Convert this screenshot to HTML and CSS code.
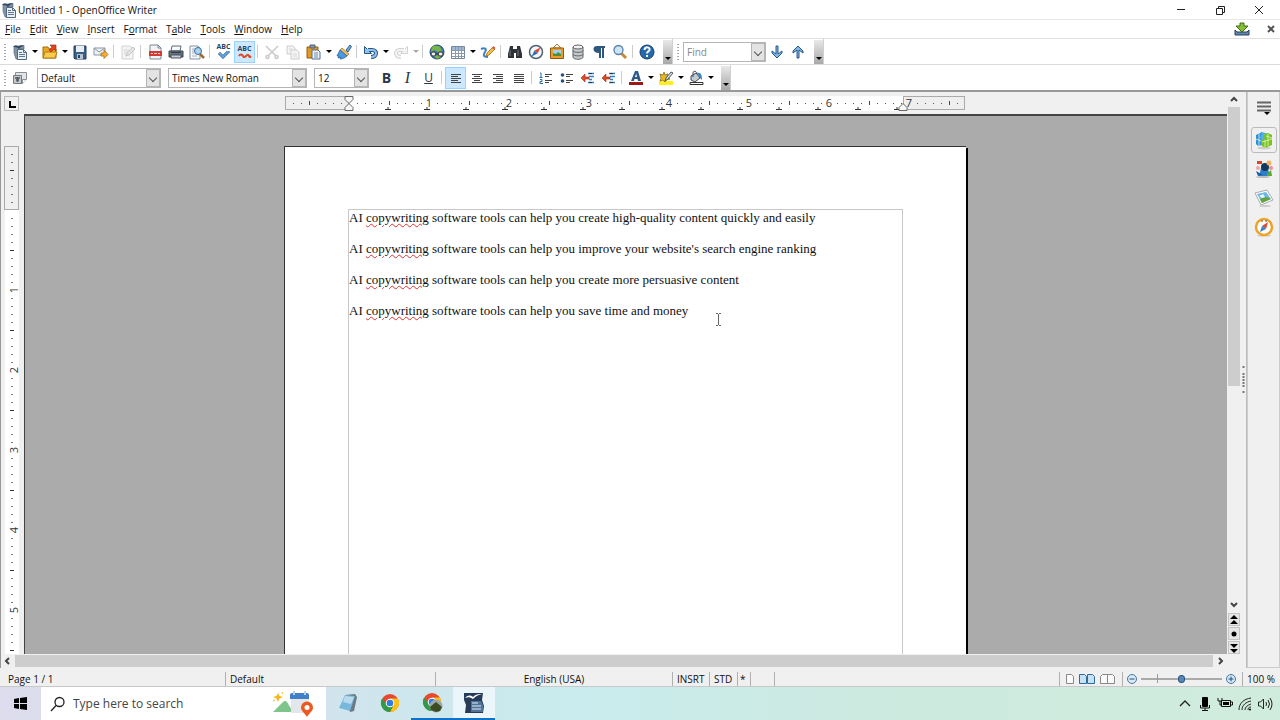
FILE: index.html
```
<!DOCTYPE html>
<html lang="en">
<head>
    <meta charset="UTF-8">
    <meta name="viewport" content="width=device-width, initial-scale=1.0">
    <title>Untitled 1 - OpenOffice Writer</title>
    <link rel="stylesheet" href="styles.css">
</head>
<body>
    <!-- icon sprite -->
    <svg class="sprite" aria-hidden="true">
        <symbol id="i-writer" viewBox="0 0 16 16"><path d="M2 2h10v3H7v10H4L2 9z" fill="#8295a6" stroke="#5b7083" stroke-width=".7"/><path d="M1 3c2-2 4-2 5-.5C8 1 10 1 13 1 10 2 8 3 7 5 5 3 3 3 1 3z" fill="#33475a"/><path d="M5.500 5.500h6l3 3v7h-9z" fill="#eaf0f5" stroke="#526a80"/><path d="M11.500 5.500v3h3" fill="none" stroke="#526a80"/><path d="M7 8.500h3M7 10.500h6M7 12.500h6" stroke="#5d7890"/></symbol>
        <symbol id="i-open" viewBox="0 0 16 16"><path d="M1 3h5l1 2h7v9H1z" fill="#e9a820" stroke="#9d6d0c"/><path d="M3 8h12l-2 6H1z" fill="#fccb4d" stroke="#b27d12"/><path d="M8 1h6v6l-2-2-3 3-2-2 3-3z" fill="#e2431e" stroke="#9c2410" stroke-width=".6"/></symbol>
        <symbol id="i-save" viewBox="0 0 16 16"><path d="M2 2h12v13H3l-1-1z" fill="#386089" stroke="#24405e"/><path d="M4 2h8v6H4z" fill="#e9eef3"/><path d="M5 10h6v5H5z" fill="#b7c4d0"/><path d="M6 11h2v3H6z" fill="#29415a"/></symbol>
        <symbol id="i-mail" viewBox="0 0 16 16"><path d="M1 4h11v7H1z" fill="#eef1f4" stroke="#8795a3"/><path d="M1 4l5 4 6-4" fill="none" stroke="#8795a3"/><path d="M8 9h3V6l4 4.500-4 4V12H8z" fill="#f6b03a" stroke="#a96c13" stroke-width=".8"/></symbol>
        <symbol id="i-edit" viewBox="0 0 16 16"><path d="M2 2h8l3 3v10H2z" fill="#f4f4f4" stroke="#d3d3d3"/><path d="M4 6h5M4 8h4M4 10h3" stroke="#d6d6d6"/><path d="M6 12l1-3 6-6 2 2-6 6z" fill="#e4e4e4" stroke="#c6c6c6"/></symbol>
        <symbol id="i-pdf" viewBox="0 0 16 16"><path d="M3 1h8l3 3v11H3z" fill="#f2f3f5" stroke="#7c8793"/><path d="M11 1v3h3" fill="none" stroke="#7c8793"/><path d="M2 7h13v5H2z" fill="#d33a34"/><path d="M4 9.500h2M7 9.500h3M11 9.500h2" stroke="#f7c9c6" fill="none"/></symbol>
        <symbol id="i-print" viewBox="0 0 16 16"><path d="M4 2h9l-1 5H3z" fill="#f7f9fb" stroke="#5b6b7a"/><path d="M1 7h14v6H1z" fill="#66737f" stroke="#3c4854"/><path d="M3 11h10v3H3z" fill="#c5ced6" stroke="#48535e"/><path d="M3 8.500h10" stroke="#343d46"/></symbol>
        <symbol id="i-preview" viewBox="0 0 16 16"><path d="M1 2h8l2 2v11H1z" fill="#f7f8f9" stroke="#8492a0"/><path d="M3 5h3M3 7h2M3 9h2M3 12h5" stroke="#a7b1bb"/><path d="M11 10l4 4" stroke="#a06a2c" stroke-width="2.500"/><circle cx="9" cy="7" r="3.500" fill="#a9d3f1" stroke="#3b6d98"/></symbol>
        <symbol id="i-cut" viewBox="0 0 16 16"><g fill="none" stroke="#c9c9c9" stroke-width="1.500"><path d="M2 2l10 10M14 2L4 12"/><circle cx="3.500" cy="13" r="1.500"/><circle cx="12.500" cy="13" r="1.500"/></g></symbol>
        <symbol id="i-copy" viewBox="0 0 16 16"><g fill="#f4f4f4" stroke="#cdcdcd"><path d="M2 2h6l2 2v6H2z"/><path d="M6 6h6l2 2v7H6z"/></g><path d="M8 10h4M8 12h4M4 5h3" stroke="#d8d8d8"/></symbol>
        <symbol id="i-paste" viewBox="0 0 16 16"><path d="M1 3h11v11H1z" fill="#e09a28" stroke="#945c0d"/><path d="M4 1h5v3H4z" fill="#8c98a5" stroke="#56616d"/><path d="M6 6h6l2 2v7H6z" fill="#eef3f8" stroke="#53708f"/><path d="M8 9h4M8 11h4M8 13h4" stroke="#6e8cab"/></symbol>
        <symbol id="i-brush" viewBox="0 0 16 16"><path d="M10 6l4-5 1.500 1.500L12 8z" fill="#7aa7d6" stroke="#2d5d92"/><path d="M6 4l7 6-2 2-7-6z" fill="#edbe62" stroke="#9b6b1b" stroke-width=".7"/><path d="M4 6l7 6c-2 2-5 3-7 3l1-2-3 1 1-2-2 0c1-2 2-4 3-6z" fill="#4c9ae0" stroke="#2162a3" stroke-width=".8"/></symbol>
        <symbol id="i-undo" viewBox="0 0 16 16"><path d="M5 6h4c6 0 5 7-1 7" fill="none" stroke="#28588a" stroke-width="4"/><path d="M1.500 2.500v7h7L6 7l-2-2z" fill="#91c0e8" stroke="#28588a"/><path d="M4 6h5c6 0 5 7-1 7" fill="none" stroke="#91c0e8" stroke-width="2"/></symbol>
        <symbol id="i-redo" viewBox="0 0 16 16"><path d="M11 6H7c-6 0-5 7 1 7" fill="none" stroke="#d2d2d2" stroke-width="4"/><path d="M14.500 2.500v7h-7L10 7l2-2z" fill="#f3f3f3" stroke="#d2d2d2"/><path d="M12 6H7c-6 0-5 7 1 7" fill="none" stroke="#f3f3f3" stroke-width="2"/></symbol>
        <symbol id="i-link" viewBox="0 0 16 16"><circle cx="8" cy="8" r="7" fill="#3c7db8" stroke="#24496e"/><path d="M3 3c3-2 6-1 8 0l2 4-4 1-3-2-4 2zM5 12l5-1 2 2-4 2z" fill="#79b544"/><rect x="2" y="8" width="5" height="4" rx="2" fill="#eee" stroke="#333"/><rect x="9" y="8" width="5" height="4" rx="2" fill="#eee" stroke="#333"/><path d="M6 10h4" stroke="#333"/></symbol>
        <symbol id="i-table" viewBox="0 0 16 16"><path d="M1.500 2.500h13v12h-13z" fill="#fff" stroke="#77889a"/><path d="M2 3h12v3H2z" fill="#9cb8d4"/><path d="M2 6.500h12M2 9.500h12M2 12.500h12M5.500 3v11M8.500 3v11M11.500 3v11" stroke="#8a9aaa"/></symbol>
        <symbol id="i-draw" viewBox="0 0 16 16"><path d="M1 5c4-2 6 0 4 3s-2 5 3 5" fill="none" stroke="#3e80c5" stroke-width="2"/><path d="M6 12l1-3 6-6 2 2-6 6z" fill="#f6be45" stroke="#a06b17" stroke-width=".8"/><path d="M12 4l1.500-2 2 2L14 5.500z" fill="#de5a4a"/></symbol>
        <symbol id="i-find" viewBox="0 0 16 16"><path d="M3 2h3v3h4V2h3l2 8v4H9V9H7v5H1v-4z" fill="#2f3236"/><path d="M3 6v6M11 6v6" stroke="#777d84"/></symbol>
        <symbol id="i-navigator" viewBox="0 0 16 16"><circle cx="8" cy="8" r="6.500" fill="#f2f6fa" stroke="#50616f" stroke-width="1.500"/><path d="M12.500 3.500L9.500 9.500 6.500 6.500z" fill="#e0452d"/><path d="M3.500 12.500l3-6 3 3z" fill="#2b6fb3"/></symbol>
        <symbol id="i-gallery" viewBox="0 0 16 16"><path d="M8 0L4 4h8z" fill="none" stroke="#a6752a"/><path d="M1.500 4h13v10.500h-13z" fill="#e89d31" stroke="#8f5a10"/><path d="M4 6h8v6H4z" fill="#9fd0ef"/><path d="M4 12V9l3 1 2-2 3 2v2z" fill="#4e8e3a"/></symbol>
        <symbol id="i-database" viewBox="0 0 16 16"><path d="M3 3v10c0 3 10 3 10 0V3z" fill="#c6c9cc" stroke="#60656a"/><ellipse cx="8" cy="3" rx="5" ry="2" fill="#eff0f1" stroke="#60656a"/><path d="M3 6.500c0 2.500 10 2.500 10 0M3 10c0 2.500 10 2.500 10 0" fill="none" stroke="#60656a"/></symbol>
        <symbol id="i-para" viewBox="0 0 16 16"><path d="M6 2h8v2h-1v10h-2V4h-1v10H8V9C1 9 1 2 6 2z" fill="#2e5780"/></symbol>
        <symbol id="i-zoom" viewBox="0 0 16 16"><path d="M9 9l5 5" stroke="#c98a32" stroke-width="3"/><circle cx="6.500" cy="6" r="4.500" fill="#cbe5f8" stroke="#5b7fa5" stroke-width="1.300"/></symbol>
        <symbol id="i-help" viewBox="0 0 16 16"><circle cx="8" cy="8" r="7" fill="#2569ac" stroke="#143f6f"/><path d="M5.500 6c0-4 6-3 5 0-.6 1.500-2.500 1.500-2.500 3.500M8 11v2" fill="none" stroke="#fff" stroke-width="2"/></symbol>
        <symbol id="i-down" viewBox="0 0 16 16"><path d="M7 2h2v8l4-3v2l-5 5-5-5V7l4 3z" fill="#84b6e4" stroke="#265789"/></symbol>
        <symbol id="i-up" viewBox="0 0 16 16"><path d="M7 14h2V6l4 3V7L8 2 3 7v2l4-3z" fill="#84b6e4" stroke="#265789"/></symbol>
        <symbol id="i-styles" viewBox="0 0 16 16"><path d="M3.500 2.500h11v7l-4 4h-7z" fill="#e2e4e6" stroke="#8a9097"/><path d="M14.500 9.500h-4v4" fill="#fff" stroke="#8a9097"/><path d="M1.500 5.500h8v8h-8z" fill="#c3c8cd" stroke="#737b84"/><path d="M3 8h5M5.500 7v5M4 10h3" stroke="#535b64" stroke-width="1.500"/></symbol>
        <symbol id="i-left" viewBox="0 0 16 16"><path d="M3 4.500h10M3 6.500h7M3 8.500h10M3 10.500h7M3 12.500h10" stroke="#444"/></symbol>
        <symbol id="i-center" viewBox="0 0 16 16"><path d="M3 4.500h10M5 6.500h6M3 8.500h10M5 10.500h6M3 12.500h10" stroke="#444"/></symbol>
        <symbol id="i-right" viewBox="0 0 16 16"><path d="M3 4.500h10M6 6.500h7M3 8.500h10M6 10.500h7M3 12.500h10" stroke="#444"/></symbol>
        <symbol id="i-justify" viewBox="0 0 16 16"><path d="M3 4.500h10M3 6.500h10M3 8.500h10M3 10.500h10M3 12.500h10" stroke="#444"/></symbol>
        <symbol id="i-numbers" viewBox="0 0 16 16"><path d="M2 3h1v4M1.500 7.500h3M2 9.500h2v2H2v2h3" fill="none" stroke="#2c6ca8"/><path d="M7 4.500h7M7 6.500h4M7 10.500h7M7 12.500h4" stroke="#444"/></symbol>
        <symbol id="i-bullets" viewBox="0 0 16 16"><circle cx="3.500" cy="5" r="1.800" fill="#24517d"/><circle cx="3.500" cy="11" r="1.800" fill="#24517d"/><path d="M7 4.500h7M7 6.500h4M7 10.500h7M7 12.500h4" stroke="#444"/></symbol>
        <symbol id="i-outdent" viewBox="0 0 16 16"><path d="M8 3.500h6M9 6.500h5M9 9.500h3M8 12.500h6" stroke="#2f80c4" stroke-width="1.500"/><path d="M9 3.500h3M9 12.500h3" stroke="#333"/><path d="M1 8l4-4v3h4v2H5v3z" fill="#df4a28" stroke="#9d2c13" stroke-width=".6"/></symbol>
        <symbol id="i-fontcolor" viewBox="0 0 16 16"><path d="M3 11L7 1h3l3 10h-3l-.5-2H6.500L6 11zM7 7h2l-.8-3.500z" fill="#2f5a87"/><path d="M1 12h14v3H1z" fill="#a01616"/></symbol>
        <symbol id="i-highlight" viewBox="0 0 16 16"><path d="M1 11h14v4H1z" fill="#ffee1d"/><path d="M2 4l3 1 1-3 1 3 3-1-1 3 3 2-4 1-1 2-2-2-3 1 1-3z" fill="#e7b91e" stroke="#775f14" stroke-width=".7"/><path d="M7 11l1-3 5-6 2 1-5 6z" fill="#d6dce2" stroke="#4d5964"/></symbol>
        <symbol id="i-fill" viewBox="0 0 16 16"><path d="M3 6l5-3 4 5-5 4-4-2z" fill="#c3cbd3" stroke="#414b55"/><path d="M5 7V3c0-3 4-2 4 1" fill="none" stroke="#414b55"/><path d="M9 3c4-1 5 2 5 7l-2-2z" fill="#3e83c4"/><path d="M2 12.500h13v2H2z" fill="#fff" stroke="#333"/></symbol>
        <symbol id="i-update" viewBox="0 0 16 16"><path d="M1 9l2 2h10l2-2v5H1z" fill="#5f88ad" stroke="#29435b"/><path d="M6 2h4v3h4l-6 6-6-6h4z" fill="#86bf36" stroke="#3d6d13"/></symbol>
        <symbol id="i-cube" viewBox="0 0 20 20"><ellipse cx="10" cy="18" rx="7" ry="1.500" fill="#ccc"/><path d="M2 5l6-3v13l-4 1-2-2z" fill="#2a8fdd"/><path d="M8 2l10 3v4l-9 2-3-3z" fill="#55aee9"/><path d="M9 5l5-2 4 2v10l-7 3-4-3v-5l4-1z" fill="#79c31e"/><path d="M2 9l5 2M5 3v13M11 10v8M8 12l10-3M14 4v12M12 6l6 2" stroke="#e6f7cb" stroke-width=".8"/></symbol>
        <symbol id="i-stylist" viewBox="0 0 20 20"><ellipse cx="9" cy="18" rx="7" ry="1" fill="#bbb"/><path d="M5 17l2-8 7 1 2 7z" fill="#2e7ec9"/><circle cx="11" cy="8" r="4" fill="#123a5c"/><path d="M3 2h5v3H3z" fill="#d44725"/><circle cx="15" cy="4" r="2.500" fill="#f2b15d"/><circle cx="17" cy="9" r="2" fill="#ee8e94"/><circle cx="4" cy="9" r="2" fill="#f0a6a2"/><path d="M13 15l4-4 1 6h-5z" fill="#58a92c"/><path d="M2 12l7 4-5 1z" fill="#1b5c9e"/></symbol>
        <symbol id="i-pictures" viewBox="0 0 20 20"><ellipse cx="11" cy="18" rx="6" ry="1" fill="#ccc"/><path d="M1 5l12-3 6 10-12 5z" fill="#fff" stroke="#aaa"/><path d="M3 6l9-2 5 7-9 4z" fill="#6ab6e6"/><path d="M6 11l6-2 5 2-9 4z" fill="#67a236"/><path d="M5 8l4-2 2 3-3 1z" fill="#eaf5fc"/></symbol>
        <symbol id="i-compass" viewBox="0 0 20 20"><ellipse cx="10" cy="18.500" rx="7" ry="1" fill="#ccc"/><circle cx="10" cy="10" r="8" fill="#fdfdfd" stroke="#eda324" stroke-width="2.500"/><path d="M14 5l-2 7-4-3z" fill="#d94b35"/><path d="M6 15l2-6 4 3z" fill="#3a84c8"/><path d="M8 5V3M12 5V3" stroke="#555"/></symbol>
        <symbol id="i-chrome" viewBox="0 0 20 20"><circle cx="10" cy="10" r="9" fill="#e6492d"/><path d="M17.800 5.500A9 9 0 0 1 10 19l3.500-7L10 5.500z" fill="#fbc318"/><path d="M10 19A9 9 0 0 1 2.200 5.500L6.500 12l7 0z" fill="#2f9a48"/><circle cx="10" cy="10" r="4.300" fill="#fff"/><circle cx="10" cy="10" r="3.300" fill="#2f7de1"/></symbol>
    </svg>

    <header class="titlebar">
        <svg class="icon"><use href="#i-writer"/></svg>
        <h1>Untitled 1 - OpenOffice Writer</h1>
        <div class="window-buttons">
            <button aria-label="Minimize"><svg class="small"><path d="M1 4.500h8" stroke="#222"/></svg></button>
            <button aria-label="Restore"><svg class="small"><path d="M1.500 3.500h6v6h-6zM3.500 3V1.500h6v6H8" fill="none" stroke="#222"/></svg></button>
            <button aria-label="Close"><svg class="small"><path d="M1 1l8 8M9 1L1 9" stroke="#222"/></svg></button>
        </div>
    </header>

    <nav class="menubar">
        <button><u>F</u>ile</button>
        <button><u>E</u>dit</button>
        <button><u>V</u>iew</button>
        <button><u>I</u>nsert</button>
        <button>F<u>o</u>rmat</button>
        <button>T<u>a</u>ble</button>
        <button><u>T</u>ools</button>
        <button><u>W</u>indow</button>
        <button><u>H</u>elp</button>
        <span class="spacer"></span>
        <button class="update" aria-label="Update"><svg class="icon"><use href="#i-update"/></svg></button>
        <button class="close-doc" aria-label="Close document"><svg class="small"><path d="M2 2l6 6M8 2L2 8" stroke="#555" stroke-width="2"/></svg></button>
    </nav>

    <div class="toolbar-row">
        <div class="toolbar">
            <span class="grip"></span>
            <button class="tool" aria-label="New"><svg class="icon"><use href="#i-writer"/></svg></button>
            <button class="drop" aria-label="New options"></button>
            <button class="tool" aria-label="Open"><svg class="icon"><use href="#i-open"/></svg></button>
            <button class="drop" aria-label="Recent files"></button>
            <button class="tool" aria-label="Save"><svg class="icon"><use href="#i-save"/></svg></button>
            <button class="tool" aria-label="E-mail"><svg class="icon"><use href="#i-mail"/></svg></button>
            <span class="sep"></span>
            <button class="tool" aria-label="Edit file"><svg class="icon"><use href="#i-edit"/></svg></button>
            <span class="sep"></span>
            <button class="tool" aria-label="Export PDF"><svg class="icon"><use href="#i-pdf"/></svg></button>
            <button class="tool" aria-label="Print"><svg class="icon"><use href="#i-print"/></svg></button>
            <button class="tool" aria-label="Page preview"><svg class="icon"><use href="#i-preview"/></svg></button>
            <span class="sep"></span>
            <button class="tool spell" aria-label="Spelling"><span class="abc">ABC</span><svg width="14" height="9"><path d="M2 2l4 4 6-6" fill="none" stroke="#234e80" stroke-width="3"/><path d="M2 2l4 4 6-6" fill="none" stroke="#5fa5dd" stroke-width="2"/></svg></button>
            <button class="tool spell active" aria-label="AutoSpellcheck"><span class="abc">ABC</span><svg width="14" height="5"><path d="M1 3c1-2 3-2 4 0s2 1 3 0 2-2 3 0 1 1 2 0" fill="none" stroke="#de4a24" stroke-width="2"/></svg></button>
            <span class="sep"></span>
            <button class="tool" aria-label="Cut"><svg class="icon"><use href="#i-cut"/></svg></button>
            <button class="tool" aria-label="Copy"><svg class="icon"><use href="#i-copy"/></svg></button>
            <button class="tool" aria-label="Paste"><svg class="icon"><use href="#i-paste"/></svg></button>
            <button class="drop" aria-label="Paste options"></button>
            <button class="tool" aria-label="Format paintbrush"><svg class="icon"><use href="#i-brush"/></svg></button>
            <span class="sep"></span>
            <button class="tool" aria-label="Undo"><svg class="icon"><use href="#i-undo"/></svg></button>
            <button class="drop" aria-label="Undo list"></button>
            <button class="tool" aria-label="Redo"><svg class="icon"><use href="#i-redo"/></svg></button>
            <button class="drop disabled" aria-label="Redo list"></button>
            <span class="sep"></span>
            <button class="tool" aria-label="Hyperlink"><svg class="icon"><use href="#i-link"/></svg></button>
            <button class="tool" aria-label="Table"><svg class="icon"><use href="#i-table"/></svg></button>
            <button class="drop" aria-label="Table size"></button>
            <button class="tool" aria-label="Draw functions"><svg class="icon"><use href="#i-draw"/></svg></button>
            <span class="sep"></span>
            <button class="tool" aria-label="Find and replace"><svg class="icon"><use href="#i-find"/></svg></button>
            <button class="tool" aria-label="Navigator"><svg class="icon"><use href="#i-navigator"/></svg></button>
            <button class="tool" aria-label="Gallery"><svg class="icon"><use href="#i-gallery"/></svg></button>
            <button class="tool" aria-label="Data sources"><svg class="icon"><use href="#i-database"/></svg></button>
            <button class="tool" aria-label="Nonprinting characters"><svg class="icon"><use href="#i-para"/></svg></button>
            <button class="tool" aria-label="Zoom"><svg class="icon"><use href="#i-zoom"/></svg></button>
            <span class="sep"></span>
            <button class="tool" aria-label="Help"><svg class="icon"><use href="#i-help"/></svg></button>
            <button class="overflow" aria-label="More buttons"></button>
        </div>
        <div class="toolbar">
            <span class="grip"></span>
            <div class="combo find">
                <input type="text" placeholder="Find" aria-label="Find">
                <span class="combo-arrow"></span>
            </div>
            <button class="tool" aria-label="Find next"><svg class="icon"><use href="#i-down"/></svg></button>
            <button class="tool" aria-label="Find previous"><svg class="icon"><use href="#i-up"/></svg></button>
            <button class="overflow" aria-label="More buttons"></button>
        </div>
    </div>

    <div class="toolbar-row formatting">
        <div class="toolbar">
            <span class="grip"></span>
            <button class="tool" aria-label="Styles and formatting"><svg class="icon"><use href="#i-styles"/></svg></button>
            <div class="combo style">
                <select aria-label="Apply style"><option>Default</option></select>
                <span class="combo-arrow"></span>
            </div>
            <div class="combo font">
                <select aria-label="Font name"><option>Times New Roman</option></select>
                <span class="combo-arrow"></span>
            </div>
            <div class="combo size">
                <select aria-label="Font size"><option>12</option></select>
                <span class="combo-arrow"></span>
            </div>
            <button class="tool letter bold first">B</button>
            <button class="tool letter italic">I</button>
            <button class="tool letter underline">U</button>
            <span class="sep"></span>
            <button class="tool active" aria-label="Align left"><svg class="icon"><use href="#i-left"/></svg></button>
            <button class="tool" aria-label="Centered"><svg class="icon"><use href="#i-center"/></svg></button>
            <button class="tool" aria-label="Align right"><svg class="icon"><use href="#i-right"/></svg></button>
            <button class="tool" aria-label="Justified"><svg class="icon"><use href="#i-justify"/></svg></button>
            <span class="sep"></span>
            <button class="tool" aria-label="Numbering"><svg class="icon"><use href="#i-numbers"/></svg></button>
            <button class="tool" aria-label="Bullets"><svg class="icon"><use href="#i-bullets"/></svg></button>
            <button class="tool" aria-label="Decrease indent"><svg class="icon"><use href="#i-outdent"/></svg></button>
            <button class="tool" aria-label="Increase indent"><svg class="icon"><use href="#i-outdent"/></svg></button>
            <span class="sep"></span>
            <button class="tool" aria-label="Font color"><svg class="icon"><use href="#i-fontcolor"/></svg></button>
            <button class="drop" aria-label="Font color list"></button>
            <button class="tool" aria-label="Highlighting"><svg class="icon"><use href="#i-highlight"/></svg></button>
            <button class="drop" aria-label="Highlighting list"></button>
            <button class="tool" aria-label="Background color"><svg class="icon"><use href="#i-fill"/></svg></button>
            <button class="drop" aria-label="Background color list"></button>
            <button class="overflow" aria-label="More buttons"></button>
        </div>
    </div>

    <main class="workspace">
        <div class="editor">
            <div class="corner"><button class="tab-type" aria-label="Tab type"><svg class="small"><path d="M3 2v6h6" fill="none" stroke="#000" stroke-width="2"/></svg></button></div>
            <div class="ruler">
                <svg width="681" height="22">
                    <defs>
                        <pattern id="inch" x="64" y="0" width="80" height="23" patternUnits="userSpaceOnUse">
                            <path d="M8 11.500h1M16 11.500h1M24 11.500h1M32 11.500h1M48 11.500h1M56 11.500h1M64 11.500h1M72 11.500h1" stroke="#555"/>
                            <path d="M40.500 9v4" stroke="#444"/>
                        </pattern>
                        <path id="tab" d="M-3 17.500h6M0 15v3" stroke="#333"/>
                    </defs>
                    <rect x="64" y="4" width="554" height="15" fill="#fff"/>
                    <rect x=".5" y="4.500" width="63" height="13" fill="#efefef" stroke="#aaa"/>
                    <rect x="618.500" y="4.500" width="61" height="13" fill="#efefef" stroke="#aaa"/>
                    <rect x="2" y="5" width="676" height="12" fill="url(#inch)"/>
                    <use href="#tab" x="103"/><use href="#tab" x="142"/><use href="#tab" x="181"/><use href="#tab" x="220"/>
                    <use href="#tab" x="259"/><use href="#tab" x="298"/><use href="#tab" x="337"/><use href="#tab" x="377"/>
                    <use href="#tab" x="416"/><use href="#tab" x="455"/><use href="#tab" x="494"/><use href="#tab" x="533"/>
                    <use href="#tab" x="573"/><use href="#tab" x="612"/>
                    <g class="ruler-text">
                        <text x="144" y="15">1</text><text x="224" y="15">2</text><text x="304" y="15">3</text>
                        <text x="384" y="15">4</text><text x="464" y="15">5</text><text x="544" y="15">6</text><text x="624" y="15">7</text>
                    </g>
                    <path d="M60 4.500h8v3l-4 4 4 4v3h-8v-3l4-4-4-4z" fill="#f7f7f7" stroke="#666"/>
                    <path d="M614 18.500v-3l4-4 4 4v3z" fill="#f7f7f7" stroke="#666"/>
                </svg>
            </div>
            <div class="vruler">
                <svg width="16" height="1000">
                    <defs>
                        <pattern id="vinch" x="0" y="64" width="16" height="80" patternUnits="userSpaceOnUse">
                            <path d="M7 8.500h2M7 16.500h2M7 24.500h2M7 32.500h2M7 48.500h2M7 56.500h2M7 64.500h2M7 72.500h2" stroke="#777"/>
                            <path d="M6 40.500h4" stroke="#333"/>
                        </pattern>
                    </defs>
                    <rect x="1" y="64" width="14" height="936" fill="#fff"/>
                    <rect x=".5" y=".5" width="14" height="63" fill="#efefef" stroke="#aaa"/>
                    <rect x="1" y="2" width="14" height="998" fill="url(#vinch)"/>
                    <g class="ruler-text">
                        <text transform="translate(14 144) rotate(-90)">1</text>
                        <text transform="translate(14 224) rotate(-90)">2</text>
                        <text transform="translate(14 304) rotate(-90)">3</text>
                        <text transform="translate(14 384) rotate(-90)">4</text>
                        <text transform="translate(14 464) rotate(-90)">5</text>
                    </g>
                </svg>
            </div>
            <div class="canvas">
                <article class="page">
                    <div class="text-area">
                        <p>AI <span class="misspelled">copywriting</span> software tools can help you create high-quality content quickly and easily</p>
                        <p>AI <span class="misspelled">copywriting</span> software tools can help you improve your website's search engine ranking</p>
                        <p>AI <span class="misspelled">copywriting</span> software tools can help you create more persuasive content</p>
                        <p>AI <span class="misspelled">copywriting</span> software tools can help you save time and money</p>
                    </div>
                    <svg class="ibeam" width="7" height="13"><path d="M1 .5h2M4 .5h2M3.500 1v11M1 12.500h2M4 12.500h2" stroke="#666"/></svg>
                </article>
            </div>
            <div class="vscroll">
                <button aria-label="Scroll up"><svg class="small"><path d="M2 7l3-3 3 3" fill="none" stroke="#444" stroke-width="2"/></svg></button>
                <div class="track"><div class="thumb"></div></div>
                <button aria-label="Scroll down"><svg class="small"><path d="M2 3l3 3 3-3" fill="none" stroke="#444" stroke-width="2"/></svg></button>
                <button class="boxed" aria-label="Previous page"><svg class="small"><path d="M5 0l4 4H1zM5 5l4 4H1z"/></svg></button>
                <button class="boxed" aria-label="Navigation"><svg class="small"><circle cx="5" cy="5" r="2.500"/></svg></button>
                <button class="boxed" aria-label="Next page"><svg class="small"><path d="M5 5l4-4H1zM5 10l4-4H1z"/></svg></button>
            </div>
            <div class="hscroll">
                <button aria-label="Scroll left"><svg class="small"><path d="M6 2L3 5l3 3" fill="none" stroke="#444" stroke-width="2"/></svg></button>
                <div class="track"></div>
                <button aria-label="Scroll right"><svg class="small"><path d="M4 2l3 3-3 3" fill="none" stroke="#444" stroke-width="2"/></svg></button>
            </div>
        </div>
        <div class="splitter"><svg width="3" height="30"><path d="M1.500 1v3M1.500 8v15M1.500 26v3" stroke="#777" stroke-width="2" stroke-dasharray="2 1"/></svg></div>
        <aside class="sidebar">
            <button aria-label="Sidebar settings"><svg width="20" height="20"><path d="M3 5.500h14M3 9.500h14M3 13.500h14" stroke="#666" stroke-width="2"/><path d="M10 15h6l-3 3z"/></svg></button>
            <button class="selected" aria-label="Properties"><svg width="20" height="20"><use href="#i-cube"/></svg></button>
            <button aria-label="Styles"><svg width="20" height="20"><use href="#i-stylist"/></svg></button>
            <button aria-label="Gallery"><svg width="20" height="20"><use href="#i-pictures"/></svg></button>
            <button aria-label="Navigator"><svg width="20" height="20"><use href="#i-compass"/></svg></button>
        </aside>
    </main>

    <footer class="statusbar">
        <span class="cell page-no">Page 1 / 1</span>
        <span class="cell page-style">Default</span>
        <span class="cell language">English (USA)</span>
        <span class="cell insert-mode">INSRT</span>
        <span class="cell select-mode">STD</span>
        <span class="cell modified">*</span>
        <span class="cell signature"></span>
        <span class="cell rest"></span>
        <span class="cell view-layout">
            <button aria-label="Single page"><svg width="9" height="12"><path d="M.5 1.500h5l2 2v7h-7z" fill="#fafafa" stroke="#888"/></svg></button>
            <button aria-label="Multiple pages"><svg width="17" height="12"><path d="M.5 1.500h5l2 2v7h-7zM8.500 1.500h5l2 2v7h-7z" fill="#c7e2f7" stroke="#2e6c9e"/></svg></button>
            <button aria-label="Book view"><svg width="16" height="12"><path d="M.5 3.500l2-2h5v9h-7zM7.500 1.500h5l2 2v7h-7z" fill="#fafafa" stroke="#888"/></svg></button>
        </span>
        <span class="cell zoom-slider">
            <button aria-label="Zoom out"><svg class="small"><circle cx="5" cy="5" r="4.500" fill="#d8eaf8" stroke="#47759e"/><path d="M2.500 5h5" stroke="#234e78"/></svg></button>
            <input type="range" min="0" max="100" value="50" aria-label="Zoom">
            <button aria-label="Zoom in"><svg class="small"><circle cx="5" cy="5" r="4.500" fill="#d8eaf8" stroke="#47759e"/><path d="M2.500 5h5M5 2.500v5" stroke="#234e78"/></svg></button>
        </span>
        <span class="cell zoom-value">100 %</span>
    </footer>

    <div class="taskbar">
        <button class="start" aria-label="Start"><svg width="15" height="15"><path d="M1 3l5-1v5H1zM7 2l7-1v6H7zM1 8h5v5l-5-1zM7 8h7v6l-7-1z"/></svg></button>
        <div class="search">
            <svg width="16" height="16"><circle cx="9.500" cy="6" r="4.500" fill="none" stroke="#222" stroke-width="1.300"/><path d="M6 9.500L1 15" stroke="#222" stroke-width="1.300"/></svg>
            <input type="text" placeholder="Type here to search" aria-label="Type here to search">
            <svg width="42" height="26"><path d="M1 21L11 11q2-2 4 0l6 10z" fill="#7dc58b"/><path d="M19 8h18v14H19z" fill="#e3e6ea"/><path d="M18 4q0-2 2-2h15q2 0 2 2v4H18z" fill="#3f7fcc"/><path d="M22 0v4M33 0v4" stroke="#bcd0e6" stroke-width="2"/><path d="M6 2l1.500 3L11 6 7.500 7.500 6 11 4.500 7.500 1 6l3.500-1z" fill="#f5b71c"/><path d="M10 1l1 2M1 10l2-1" stroke="#f5b71c"/><path d="M35 26c-3-5-6-6-6-9.500a6 6 0 0 1 12 0c0 3.500-3 4.500-6 9.500z" fill="#ea5a22"/><circle cx="35" cy="16.500" r="2.500" fill="#fff"/></svg>
        </div>
        <button class="app" aria-label="Notepad"><svg width="20" height="20" viewBox="0 0 20 20"><path d="M7 2l10-1 2 3-3 14-4 1z" fill="#6e7880"/><path d="M7 2l10 1-5 15L1 15z" fill="#79b8dc"/><path d="M7 3l9 1-3 7-8-2z" fill="#b8dbee"/></svg></button>
        <button class="app" aria-label="Chrome"><svg width="20" height="20"><use href="#i-chrome"/></svg></button>
        <button class="app open" aria-label="Chrome profile"><svg width="24" height="22"><use href="#i-chrome" x="2" width="20" height="20"/><circle cx="16" cy="14" r="6.500" fill="#9ba8aa"/><path d="M10 15l6-5 6 5-2 4-4 1-5-2z" fill="#3e4c22"/></svg></button>
        <button class="app open current" aria-label="OpenOffice Writer"><svg width="22" height="22" viewBox="0 0 22 22"><path d="M1 1h19l-1 7 2 6-1 7H2l1-8-2-5z" fill="#243c58"/><path d="M8 9h10l2 4v7H8z" fill="#507298"/><path d="M2 6c3-3 5-3 8-1 3-3 5-3 9-3-4 1-6 2-9 5-3-2-5-2-8-1z" fill="#fff"/><path d="M9 11h6M9 14h9M9 17h9" stroke="#dfeaf4"/></svg></button>
        <span class="spacer"></span>
        <div class="tray">
            <button aria-label="Show hidden icons"><svg width="16" height="16"><path d="M3 10l5-5 5 5" fill="none" stroke="#222" stroke-width="1.300"/></svg></button>
            <button aria-label="Microphone"><svg width="16" height="16"><rect x="5" y="1" width="6" height="10" rx="1"/><path d="M3.500 9v3h9V9M8 12v3M5 14.500h6" fill="none" stroke="#111"/></svg></button>
            <button aria-label="Battery"><svg width="16" height="16"><path d="M4.500 4.500h9v6h-9zM14 6h1.500v3H14" fill="none" stroke="#111"/><path d="M6 6h6v3H6z"/><path d="M1 2v3h4V2M3 5v4h2" fill="none" stroke="#111"/></svg></button>
            <button aria-label="Network"><svg width="16" height="16"><path d="M2 14C2 7 7 3 14 2M5 14c0-5 4-8 9-9M8 14c0-3 3-5 6-6M11 14c0-2 1-3 3-3" fill="none" stroke="#222"/><circle cx="13" cy="13.500" r="1"/></svg></button>
            <button aria-label="Volume"><svg width="16" height="16"><path d="M1.500 6h2l3-3v10l-3-3h-2zM9 6q1 2 0 4M11 4q3 4 0 8M13 2q4 6 0 12" fill="none" stroke="#222"/></svg></button>
        </div>
    </div>
</body>
</html>
```

FILE: styles.css
```
:root {
    --ui-font: "Open Sans", "Noto Sans", sans-serif;
    --chrome-bg: #f0f0f0;
    --canvas-bg: #ababab;
    --line: #bdbdbd;
    --active-bg: #cce8ff;
    --active-border: #99d1ff;
}

* {
    box-sizing: border-box;
    margin: 0;
    padding: 0;
}

body {
    display: flex;
    flex-direction: column;
    height: 100vh;
    overflow: hidden;
    background-color: #fff;
    color: #111;
    font-family: var(--ui-font);
    font-size: 10px;
    line-height: 16px;
}

button {
    display: flex;
    align-items: center;
    justify-content: center;
    border: none;
    background: none;
    color: inherit;
    font: inherit;
}

svg {
    display: block;
    flex-shrink: 0;
}

.sprite {
    position: absolute;
    width: 0;
    height: 0;
}

.icon {
    width: 16px;
    height: 16px;
}

.small {
    width: 10px;
    height: 10px;
}

.spacer {
    flex: 1;
}

/* title and menu */
.titlebar {
    display: flex;
    align-items: center;
    height: 19px;
    padding: 0 2px 0 1px;
}

.titlebar h1 {
    flex: 1;
    padding-left: 1px;
    font-size: 10px;
    font-weight: 400;
}

.window-buttons {
    display: flex;
}

.window-buttons button {
    width: 39px;
    height: 19px;
}

.menubar {
    display: flex;
    align-items: center;
    gap: 1px;
    height: 20px;
    padding-left: 1px;
    border-top: 1px solid #e8e8e8;
    border-bottom: 1px solid #e0e0e0;
}

.menubar button {
    padding: 0 4px;
}

.menubar .update {
    padding: 0 11px;
}

/* toolbars */
.toolbar-row {
    display: flex;
    height: 26px;
    border-bottom: 1px solid #dcdcdc;
}

.toolbar-row.formatting {
    height: 25px;
    border-bottom: none;
}

.toolbar {
    display: flex;
    align-items: center;
    border-right: 1px solid #d0d0d0;
}

.grip {
    width: 2px;
    height: 16px;
    margin: 0 3px 0 4px;
    background: repeating-linear-gradient(#aaa 0 1px, #fff 1px 3px);
}

.tool {
    width: 21px;
    height: 22px;
}

.tool.active {
    border: 1px solid var(--active-border);
    background-color: var(--active-bg);
}

.spell {
    flex-direction: column;
}

.abc {
    color: #234567;
    font-size: 7px;
    font-weight: 700;
    line-height: 8px;
}

.drop {
    width: 9px;
    height: 22px;
}

.drop::before,
.overflow::before {
    content: "";
    border: 3px solid transparent;
    border-top-color: #000;
    border-bottom: none;
}

.drop.disabled::before {
    border-top-color: #aaa;
}

.sep {
    width: 1px;
    height: 13px;
    margin: 0 3px 0 2px;
    background-color: #ccc;
}

.overflow {
    align-items: flex-end;
    width: 9px;
    height: 24px;
    margin-left: 6px;
    padding-bottom: 4px;
    background: linear-gradient(#e8e8e8, #a8a8a8);
}

.combo {
    display: flex;
    align-items: center;
    height: 20px;
    margin-left: 7px;
    border: 1px solid #b5b5b5;
    background-color: #fff;
}

.combo select,
.combo input {
    flex: 1;
    min-width: 0;
    height: 18px;
    padding-left: 3px;
    border: none;
    outline: none;
    appearance: none;
    background: none;
    color: #111;
    font: inherit;
}

.combo input::placeholder {
    color: #888;
}

.combo-arrow {
    display: flex;
    align-items: center;
    justify-content: center;
    width: 14px;
    height: 18px;
    border: 1px solid #b5b5b5;
    background-color: #e3e3e3;
}

.combo-arrow::before {
    content: "";
    width: 5px;
    height: 5px;
    border: solid #555;
    border-width: 0 1px 1px 0;
    transform: rotate(45deg);
}

.combo.style {
    width: 124px;
}

.combo.font {
    width: 139px;
}

.combo.size {
    width: 55px;
}

.combo.find {
    width: 83px;
    margin-left: 1px;
}

.letter {
    color: #2b3947;
    font-size: 14px;
}

.letter.first {
    margin-left: 7px;
}

.bold {
    font-weight: 700;
}

.italic {
    font-family: "Liberation Serif", serif;
    font-size: 16px;
    font-style: italic;
}

.underline {
    font-size: 12px;
    text-decoration: underline;
}

/* editing area */
.workspace {
    display: flex;
    flex: 1;
    min-height: 0;
    border-top: 2px solid #999;
    background-color: var(--chrome-bg);
}

.editor {
    display: grid;
    grid-template: 22px minmax(0, 1fr) 14px / 23px minmax(0, 1fr) 14px;
    flex: 1;
    min-width: 0;
    border-left: 1px solid #999;
}

.corner {
    padding: 4px 3px;
}

.tab-type {
    width: 15px;
    height: 15px;
    border: 1px solid #bbb;
}

.ruler {
    display: flex;
    justify-content: center;
}

.ruler-text {
    font-size: 11px;
    text-anchor: middle;
    fill: #333;
}

.vruler {
    padding: 32px 3px 0;
    overflow: hidden;
}

.canvas {
    display: flex;
    justify-content: center;
    align-items: flex-start;
    padding: 30px 2px 0 0;
    overflow: hidden;
    border-top: 2px solid #444;
    border-left: 1px solid #444;
    background-color: var(--canvas-bg);
}

.page {
    position: relative;
    width: 682px;
    min-height: 880px;
    padding: 62px 63px;
    border: 1px solid #333;
    border-right: none;
    background-color: #fff;
    box-shadow: 2px 2px 0 #000;
}

.text-area {
    min-height: 752px;
    border: 1px solid #c8c8c8;
    color: #111;
    font-family: "Liberation Serif", "Times New Roman", serif;
    font-size: 13px;
    line-height: 15px;
}

.text-area p {
    margin-bottom: 16px;
    white-space: nowrap;
}

.misspelled {
    text-decoration: underline wavy #e03030 1px;
    text-underline-offset: 1px;
}

/* mouse pointer over the text */
.ibeam {
    position: absolute;
    left: 430px;
    top: 166px;
}

.vscroll {
    display: flex;
    grid-row: 1 / 3;
    grid-column: 3;
    flex-direction: column;
    gap: 1px;
}

.vscroll button {
    height: 14px;
}

.vscroll .boxed {
    height: 13px;
    margin: 0 1px;
    border: 1px solid #c4c4c4;
    background-color: #e6e6e6;
}

.track {
    flex: 1;
}

.thumb {
    width: 12px;
    height: 57%;
    margin: 0 auto;
    background-color: #cdcdcd;
}

.hscroll {
    display: flex;
    grid-column: 1 / 3;
    padding: 1px 0;
}

.hscroll button {
    width: 14px;
}

.hscroll .track {
    background-color: #cdcdcd;
}

.splitter {
    display: flex;
    align-items: center;
    justify-content: center;
    width: 6px;
    border-right: 1px solid var(--line);
}

.sidebar {
    display: flex;
    flex-direction: column;
    align-items: center;
    gap: 3px;
    width: 33px;
    padding-top: 2px;
    border: 1px solid #ccc;
    border-top: none;
}

.sidebar button {
    width: 26px;
    height: 26px;
}

.sidebar button:first-child {
    margin-bottom: 4px;
}

.sidebar .selected {
    border: 1px solid #bbb;
    border-radius: 3px;
}

/* status bar */
.statusbar {
    display: flex;
    align-items: center;
    height: 19px;
    padding-top: 3px;
    border-bottom: 1px solid #c8c8c8;
    background-color: var(--chrome-bg);
}

.cell {
    display: flex;
    align-items: center;
    height: 14px;
    padding-left: 4px;
    border-right: 1px solid #b0b0b0;
}

.page-no {
    width: 226px;
    padding-left: 8px;
}

.page-style {
    width: 210px;
}

.language {
    justify-content: center;
    width: 237px;
    padding-left: 0;
}

.insert-mode {
    width: 37px;
}

.select-mode {
    width: 28px;
}

.modified {
    width: 13px;
    padding-left: 2px;
}

.signature {
    width: 24px;
}

.rest {
    flex: 1;
}

.view-layout {
    gap: 4px;
    width: 63px;
    padding-left: 6px;
}

.zoom-slider {
    gap: 4px;
    width: 120px;
    padding-right: 6px;
}

.zoom-slider input {
    flex: 1;
    min-width: 0;
    height: 10px;
    appearance: none;
    background: linear-gradient(#999, #999) 20% 50% / 1px 9px no-repeat, linear-gradient(#aaa, #aaa) 0 50% / 100% 2px no-repeat;
}

.zoom-slider input::-webkit-slider-thumb {
    width: 7px;
    height: 8px;
    appearance: none;
    border: 1px solid #28547d;
    border-radius: 3px;
    background-color: #5687b3;
}

.zoom-value {
    width: 37px;
    border-right: none;
}

/* windows taskbar */
.taskbar {
    display: flex;
    height: 33px;
    background: linear-gradient(90deg, #dddcec 0, #d0e5ed 28%, #c9ecee 45%, #cdeae0 68%, #d0ecdd 100%);
}

.start {
    width: 41px;
}

.search {
    display: flex;
    align-items: center;
    gap: 7px;
    width: 285px;
    padding: 0 12px 0 9px;
    background-color: #fff;
}

.search input {
    flex: 1;
    min-width: 0;
    border: none;
    outline: none;
    background: none;
    font-family: inherit;
    font-size: 12px;
}

.search input::placeholder {
    color: #444;
}

.app {
    width: 42px;
    border-bottom: 2px solid transparent;
}

.search + .app {
    margin-left: 1px;
}

.app.open {
    border-bottom-color: #1071c9;
}

.app.current {
    background-color: #eaf6f9;
}

.tray {
    display: flex;
    align-items: center;
    gap: 4px;
    padding-right: 7px;
}
```
